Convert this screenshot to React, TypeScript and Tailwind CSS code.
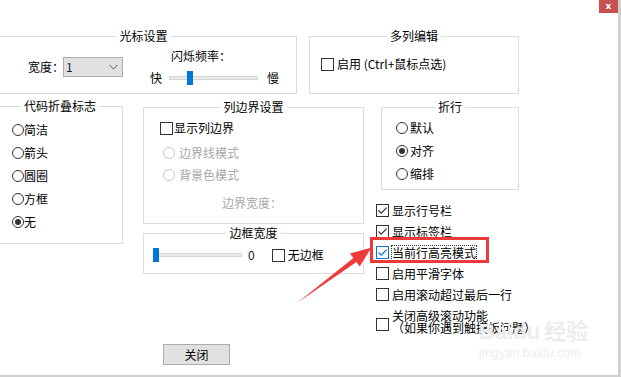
import React from "react";

function Group({ title, className, children }: { title: string; className: string; children?: React.ReactNode }) {
  return (
    <div className={`shrink-0 border border-[#dcdcdc] ${className}`}>
      <div className="-mt-[9px] mx-auto w-fit bg-white px-[3px] leading-[16px]">{title}</div>
      {children}
    </div>
  );
}

function Check({ checked = false, blue = false }: { checked?: boolean; blue?: boolean }) {
  const c = blue ? "#0078d7" : "#333333";
  return (
    <span
      className={`flex h-[13px] w-[13px] shrink-0 items-center justify-center border bg-white ${
        blue ? "border-[#0078d7]" : "border-[#333333]"
      }`}
    >
      {checked && (
        <svg width="11" height="11" viewBox="0 0 11 11">
          <path d="M1.5 5.5 L4.2 8.2 L9.6 2.6" fill="none" stroke={c} strokeWidth="1.2" />
        </svg>
      )}
    </span>
  );
}

function Radio({ checked = false, disabled = false }: { checked?: boolean; disabled?: boolean }) {
  return (
    <span
      className={`flex h-[12px] w-[12px] shrink-0 items-center justify-center rounded-full border ${
        disabled ? "border-[#cccccc]" : "border-[#333333]"
      }`}
    >
      {checked && <span className="h-[6px] w-[6px] rounded-full bg-[#333333]" />}
    </span>
  );
}

export default function App() {
  return (
    <div className="relative h-[377px] w-[621px] overflow-hidden border-b-2 border-r-[3px] border-[#d0d0d0] bg-white font-['Noto_Sans_CJK_SC','Microsoft_YaHei',sans-serif] text-[12px] leading-[16px] text-black">
      {/* window close */}
      <div className="absolute right-0 top-0 flex h-[13px] w-[19px] items-center justify-center bg-[#c75050] font-['DejaVu_Sans',sans-serif] text-[9px] font-bold leading-none text-white">
        x
      </div>

      <div className="pt-[36px]">
        {/* row 1 */}
        <div className="flex">
          <Group title="光标设置" className="-ml-[10px] h-[58px] w-[307px]">
            <div className="flex">
              <div className="ml-[37px] mt-[13px] flex h-[20px] items-center">
                <span className="w-[35px] shrink-0 whitespace-nowrap">宽度：</span>
                <div className="flex h-[20px] w-[60px] shrink-0 items-center justify-between border border-[#adadad] bg-[#e1e1e1] pl-[2px] pr-[4px]">
                  <span className="text-[#1a1a40]">1</span>
                  <svg width="9" height="6" viewBox="0 0 9 6">
                    <path d="M0.5 1 L4.5 5 L8.5 1" fill="none" stroke="#555" strokeWidth="1" />
                  </svg>
                </div>
              </div>
              <div className="ml-[27px] mt-[4px]">
                <div className="whitespace-nowrap pl-[21px]">闪烁频率：</div>
                <div className="mt-[6px] flex h-[16px] items-center">
                  <span>快</span>
                  <div className="relative ml-[7px] h-[4px] w-[89px] border border-[#d6d6d6] bg-[#e7eaea]">
                    <span className="absolute -top-[6px] left-[17px] h-[14px] w-[6px] bg-[#0078d7]" />
                  </div>
                  <span className="ml-[9px]">慢</span>
                </div>
              </div>
            </div>
          </Group>

          <Group title="多列编辑" className="ml-[12px] h-[58px] w-[210px]">
            <div className="mt-[12px] flex h-[16px] items-center pl-[11px]">
              <Check />
              <span className="ml-[3px] whitespace-nowrap">启用 (Ctrl+鼠标点选)</span>
            </div>
          </Group>
        </div>

        {/* row 2 */}
        <div className="mt-[12px] flex items-start">
          <Group title="代码折叠标志" className="-ml-[3px] h-[138px] w-[126px]">
            <div className="mt-[4px] flex flex-col pl-[14px]">
              {["简洁", "箭头", "圆圈", "方框", "无"].map((t, i) => (
                <div key={t} className="flex h-[23px] items-center">
                  <Radio checked={i === 4} />
                  <span>{t}</span>
                </div>
              ))}
            </div>
          </Group>

          <div className="ml-[20px] mt-[1px] flex flex-col">
            <Group title="列边界设置" className="h-[117px] w-[221px]">
              <div className="mt-[5px] flex h-[16px] items-center pl-[16px]">
                <Check />
                <span className="ml-[1px]">显示列边界</span>
              </div>
              <div className="mt-[9px] flex h-[16px] items-center pl-[19px] text-[#a8a8a8]">
                <Radio disabled />
                <span className="ml-[4px]">边界线模式</span>
              </div>
              <div className="mt-[6px] flex h-[16px] items-center pl-[19px] text-[#a8a8a8]">
                <Radio disabled />
                <span className="ml-[4px]">背景色模式</span>
              </div>
              <div className="mt-[12px] whitespace-nowrap pl-[78px] text-[#a8a8a8]">边界宽度：</div>
            </Group>

            <Group title="边框宽度" className="mt-[9px] h-[41px] w-[221px]">
              <div className="mt-[6px] flex h-[16px] items-center pl-[9px]">
                <div className="relative h-[4px] w-[89px] border border-[#d6d6d6] bg-[#e7eaea]">
                  <span className="absolute -left-[1px] -top-[6px] h-[14px] w-[6px] bg-[#0078d7]" />
                </div>
                <span className="ml-[6px] text-[#1a1a40]">0</span>
                <span className="ml-[17px]">
                  <Check />
                </span>
                <span className="ml-[3px]">无边框</span>
              </div>
            </Group>

            <button className="ml-[20px] mt-[70px] h-[21px] w-[67px] border border-[#adadad] bg-[#e1e1e1] text-[12px] leading-[16px]">
              关闭
            </button>
          </div>

          <div className="ml-[17px] mt-[1px] flex flex-col">
            <Group title="折行" className="h-[83px] w-[138px]">
              <div className="mt-[5px] flex flex-col gap-[7px] pl-[14px]">
                {["默认", "对齐", "缩排"].map((t, i) => (
                  <div key={t} className="flex h-[16px] items-center">
                    <Radio checked={i === 1} />
                    <span className="ml-[2px]">{t}</span>
                  </div>
                ))}
              </div>
            </Group>

            <div className="-ml-[5px] mt-[10px] flex flex-col">
              <div className="flex h-[21px] items-center">
                <Check checked />
                <span className="ml-[3px]">显示行号栏</span>
              </div>
              <div className="flex h-[21px] items-center">
                <Check checked />
                <span className="ml-[3px]">显示标签栏</span>
              </div>
              <div className="relative flex h-[21px] items-center">
                <Check checked blue />
                <span className="ml-[2px] border border-dotted border-[#333333] leading-[14px]">当前行高亮模式</span>
                <span className="absolute -left-[6px] -top-[5px] h-[26px] w-[119px] border-[3px] border-[#ee3a3a]" />
              </div>
              <div className="flex h-[21px] items-center">
                <Check />
                <span className="ml-[3px]">启用平滑字体</span>
              </div>
              <div className="flex h-[21px] items-center">
                <Check />
                <span className="ml-[3px]">启用滚动超过最后一行</span>
              </div>
              <div className="mt-[5px] flex items-start">
                <span className="mt-[8px]">
                  <Check />
                </span>
                <div className="ml-[3px] whitespace-nowrap leading-[12px]">
                  <div>关闭高级滚动功能</div>
                  <div>（如果你遇到触摸板问题）</div>
                </div>
              </div>
            </div>
          </div>
        </div>
      </div>

      {/* watermark */}
      <div className="pointer-events-none absolute left-[479px] top-[320px] text-[#ededed]">
        <div className="font-['Liberation_Sans','Noto_Sans_CJK_SC',sans-serif] text-[22px] font-bold leading-[24px]">
          Baidu<span className="ml-[4px]">经验</span>
        </div>
        <div className="mt-[2px] font-['Liberation_Sans',sans-serif] text-[12px] leading-[14px] tracking-[0.3px]">
          jingyan.baidu.com
        </div>
      </div>

      {/* annotation arrow */}
      <svg className="pointer-events-none absolute left-0 top-0" width="621" height="377" viewBox="0 0 621 377">
        <polygon
          points="297,303 353.4,258 350.1,253.6 371.5,247.5 359.7,266.4 356.4,262"
          fill="#ef3b3b"
        />
      </svg>
    </div>
  );
}
